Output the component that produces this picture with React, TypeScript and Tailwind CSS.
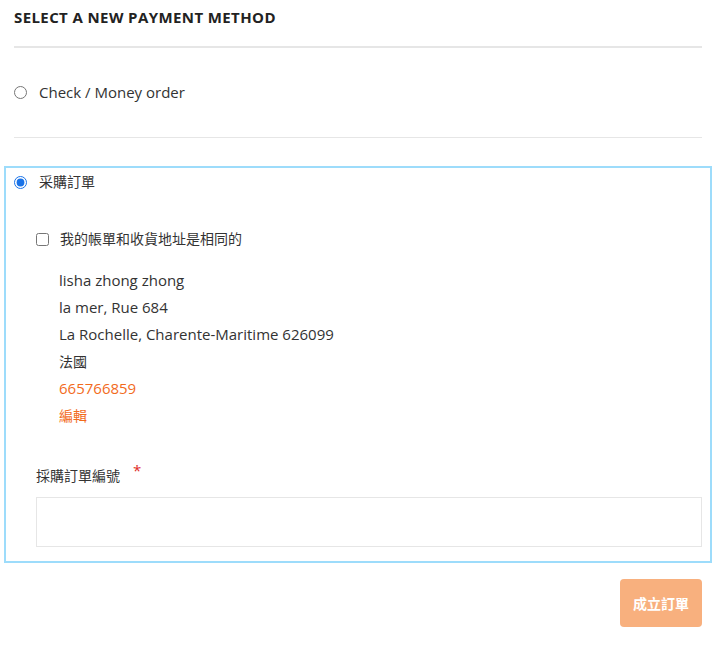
import React from 'react';

const font = {
  fontFamily: '"Open Sans", "Noto Sans CJK TC", sans-serif',
};

const App: React.FC = () => {
  const [method, setMethod] = React.useState('po');
  const [sameAddress, setSameAddress] = React.useState(false);
  const [poNumber, setPoNumber] = React.useState('');

  return (
    <div
      className="w-[725px] min-h-[649px] bg-white pl-[14px] pr-[23px] pt-[7px] text-[14px] text-[#333]"
      style={font}
    >
      {/* Title */}
      <div className="pb-[19px] border-b-2 border-[#e6e6e6]">
        <h2 className="text-[15px] leading-5 font-bold uppercase tracking-[0.4px] text-[#222]">
          Select a new payment method
        </h2>
      </div>

      {/* Check / Money order */}
      <label className="flex items-center gap-[12px] pt-[34px] pb-[35px] border-b border-[#e6e6e6] cursor-pointer">
        <input
          type="radio"
          name="payment"
          checked={method === 'check'}
          onChange={() => setMethod('check')}
          className="m-0 w-[13px] h-[13px] accent-[#1a73e8]"
        />
        <span className="leading-5 text-[15px]">Check / Money order</span>
      </label>

      {/* Purchase order */}
      <div className="mt-[28px] -mx-[10px] border-2 border-[#9ddcfb] px-[8px] pt-[4px] pb-[14px]">
        <label className="flex items-center gap-[12px] cursor-pointer">
          <input
            type="radio"
            name="payment"
            checked={method === 'po'}
            onChange={() => setMethod('po')}
            className="m-0 w-[13px] h-[13px] accent-[#1a73e8]"
          />
          <span className="leading-5">采購訂單</span>
        </label>

        <div className="pl-[22px]">
          <label className="mt-[37px] flex items-center gap-[11px] cursor-pointer">
            <input
              type="checkbox"
              checked={sameAddress}
              onChange={(e) => setSameAddress(e.target.checked)}
              className="m-0 w-[13px] h-[13px]"
            />
            <span className="leading-5">我的帳單和收貨地址是相同的</span>
          </label>

          <div className="mt-[18px] pl-[23px] text-[15px] leading-[27px]">
            <div>lisha zhong zhong</div>
            <div>la mer, Rue 684</div>
            <div>La Rochelle, Charente-Maritime 626099</div>
            <div className="text-[14px]">法國</div>
            <div className="text-[#f26b1d]">665766859</div>
            <a href="#" className="block text-[14px] text-[#f26b1d]">
              編輯
            </a>
          </div>

          <div className="mt-[37px] flex items-start leading-5">
            <span>採購訂單編號</span>
            <span className="ml-[13px] -mt-[6px] text-[15px] text-[#e02b27]">*</span>
          </div>

          <input
            type="text"
            value={poNumber}
            onChange={(e) => setPoNumber(e.target.value)}
            className="mt-[11px] block w-full h-[50px] border border-[#e6e6e6] px-3 outline-none"
          />
        </div>
      </div>

      {/* Place order */}
      <div className="mt-[16px] flex justify-end">
        <button
          type="button"
          className="w-[82px] h-[48px] rounded-[4px] bg-[#f8b07e] text-white font-bold text-[14px]"
        >
          成立訂單
        </button>
      </div>
    </div>
  );
};

export default App;
